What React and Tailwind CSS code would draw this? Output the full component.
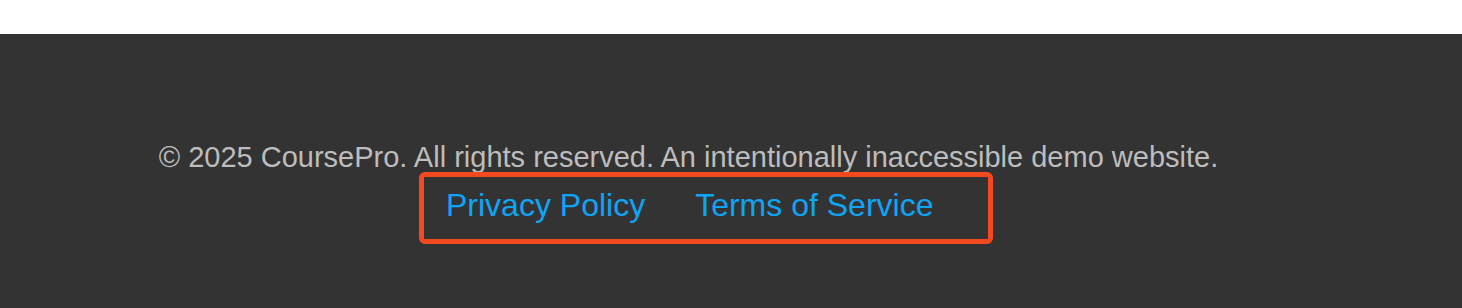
const Footer = () => {
    return (
        <footer className="bg-[#333333] h-[274px] pt-[109px] pr-[85px] flex flex-col items-center font-['Liberation_Sans',Arial,sans-serif]">
            <p className="text-[29px] leading-[29px] text-[#bdbdbd] whitespace-nowrap">
                © 2025 CoursePro. All rights reserved. An intentionally inaccessible demo website.
            </p>
            <nav className="ml-[35px] w-[574px] h-[72px] border-[5px] border-[#f4491f] rounded-[6px] pl-[22px] pt-[10px] flex gap-[50px]">
                <a href="#" className="text-[32px] leading-[37px] text-[#0ea5f7] whitespace-nowrap">Privacy Policy</a>
                <a href="#" className="text-[32px] leading-[37px] text-[#0ea5f7] whitespace-nowrap">Terms of Service</a>
            </nav>
        </footer>
    );
};

export default function App() {
    return (
        <div className="w-full h-[308px] bg-white">
            <div className="h-[34px]"></div>
            <Footer />
        </div>
    );
}
